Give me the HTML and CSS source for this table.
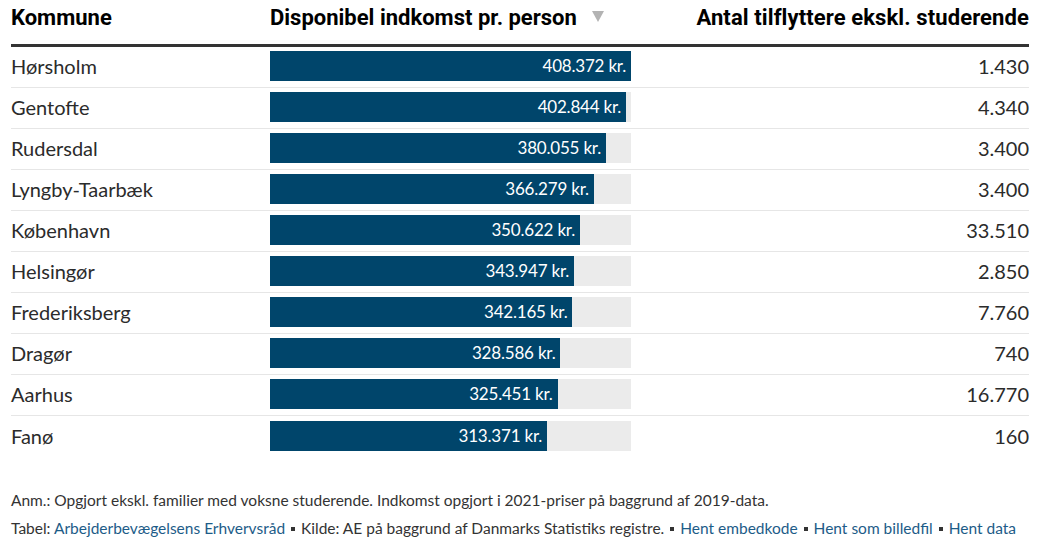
FILE: index.html
```html
<!DOCTYPE html>
<html lang="da">
<head>
<meta charset="utf-8">
<title>Disponibel indkomst</title>
<link rel="stylesheet" href="styles.css">
</head>
<body>
<div class="chart">
  <div class="thead">
    <div class="th col-name">Kommune</div>
    <div class="th col-bar">Disponibel indkomst pr. person<span class="sort"></span></div>
    <div class="th col-num">Antal tilflyttere ekskl. studerende</div>
  </div>
  <div class="row">
    <div class="col-name">Hørsholm</div>
    <div class="col-bar"><div class="track"><div class="bar" style="width:100%">408.372 kr.</div></div></div>
    <div class="col-num">1.430</div>
  </div>
  <div class="row">
    <div class="col-name">Gentofte</div>
    <div class="col-bar"><div class="track"><div class="bar" style="width:98.65%">402.844 kr.</div></div></div>
    <div class="col-num">4.340</div>
  </div>
  <div class="row">
    <div class="col-name">Rudersdal</div>
    <div class="col-bar"><div class="track"><div class="bar" style="width:93.07%">380.055 kr.</div></div></div>
    <div class="col-num">3.400</div>
  </div>
  <div class="row">
    <div class="col-name">Lyngby-Taarbæk</div>
    <div class="col-bar"><div class="track"><div class="bar" style="width:89.69%">366.279 kr.</div></div></div>
    <div class="col-num">3.400</div>
  </div>
  <div class="row">
    <div class="col-name">København</div>
    <div class="col-bar"><div class="track"><div class="bar" style="width:85.86%">350.622 kr.</div></div></div>
    <div class="col-num">33.510</div>
  </div>
  <div class="row">
    <div class="col-name">Helsingør</div>
    <div class="col-bar"><div class="track"><div class="bar" style="width:84.22%">343.947 kr.</div></div></div>
    <div class="col-num">2.850</div>
  </div>
  <div class="row">
    <div class="col-name">Frederiksberg</div>
    <div class="col-bar"><div class="track"><div class="bar" style="width:83.79%">342.165 kr.</div></div></div>
    <div class="col-num">7.760</div>
  </div>
  <div class="row">
    <div class="col-name">Dragør</div>
    <div class="col-bar"><div class="track"><div class="bar" style="width:80.46%">328.586 kr.</div></div></div>
    <div class="col-num">740</div>
  </div>
  <div class="row">
    <div class="col-name">Aarhus</div>
    <div class="col-bar"><div class="track"><div class="bar" style="width:79.69%">325.451 kr.</div></div></div>
    <div class="col-num">16.770</div>
  </div>
  <div class="row last">
    <div class="col-name">Fanø</div>
    <div class="col-bar"><div class="track"><div class="bar" style="width:76.74%">313.371 kr.</div></div></div>
    <div class="col-num">160</div>
  </div>
  <div class="footer">
    <p class="note">Anm.: Opgjort ekskl. familier med voksne studerende. Indkomst opgjort i 2021-priser på baggrund af 2019-data.</p>
    <p class="source">Tabel: <a href="#">Arbejderbevægelsens Erhvervsråd</a> <span class="dot"></span> Kilde: AE på baggrund af Danmarks Statistiks registre. <span class="dot"></span> <a href="#">Hent embedkode</a> <span class="dot"></span> <a href="#">Hent som billedfil</a> <span class="dot"></span> <a href="#">Hent data</a></p>
  </div>
</div>
</body>
</html>
```

FILE: styles.css
```css
html, body {
  margin: 0;
  padding: 0;
  background: #fff;
}
body {
  font-family: Lato, "Noto Sans", sans-serif;
  color: #333;
}
.chart {
  width: 1018px;
  padding: 0 0 0 11px;
}
.thead {
  display: flex;
  align-items: flex-end;
  border-bottom: 3px solid #333;
  box-sizing: border-box;
  height: 47px;
  padding-bottom: 13px;
}
.th {
  font-family: Roboto, "Liberation Sans", sans-serif;
  font-weight: 700;
  font-size: 22px;
  color: #000;
  line-height: 26px;
}
.sort {
  display: inline-block;
  width: 0;
  height: 0;
  border-left: 6px solid transparent;
  border-right: 6px solid transparent;
  border-top: 11px solid #b3b3b3;
  margin-left: 15px;
  vertical-align: 3px;
}
.col-name {
  width: 259px;
  flex: none;
}
.col-bar {
  width: 361px;
  flex: none;
}
.th.col-bar {
  white-space: nowrap;
}
.col-num {
  flex: 1;
  text-align: right;
}
.th.col-num {
  letter-spacing: 0.1px;
}
.row {
  display: flex;
  align-items: center;
  height: 41px;
  box-sizing: border-box;
  padding: 4px 0 6px;
  border-bottom: 1px solid #e6e6e6;
  font-size: 20px;
  line-height: 30px;
  color: #2b2b2b;
}
.row.last {
  border-bottom: none;
}
.row .col-num {
  font-variant-numeric: tabular-nums;
}
.track {
  background: #ebebeb;
  height: 30px;
}
.bar {
  background: #00456b;
  height: 30px;
  color: #fff;
  font-size: 17px;
  line-height: 30px;
  text-align: right;
  padding-right: 5px;
  box-sizing: border-box;
  letter-spacing: -0.2px;
  white-space: nowrap;
}
.footer {
  padding-top: 29px;
  font-size: 15.5px;
  color: #333;
}
.footer p {
  margin: 0;
  line-height: 28px;
}
.footer a {
  color: #1d5c88;
  text-decoration: none;
}
.dot {
  display: inline-block;
  width: 4px;
  height: 4px;
  margin: 0 2px;
  background: #333;
  vertical-align: 3px;
}
```
